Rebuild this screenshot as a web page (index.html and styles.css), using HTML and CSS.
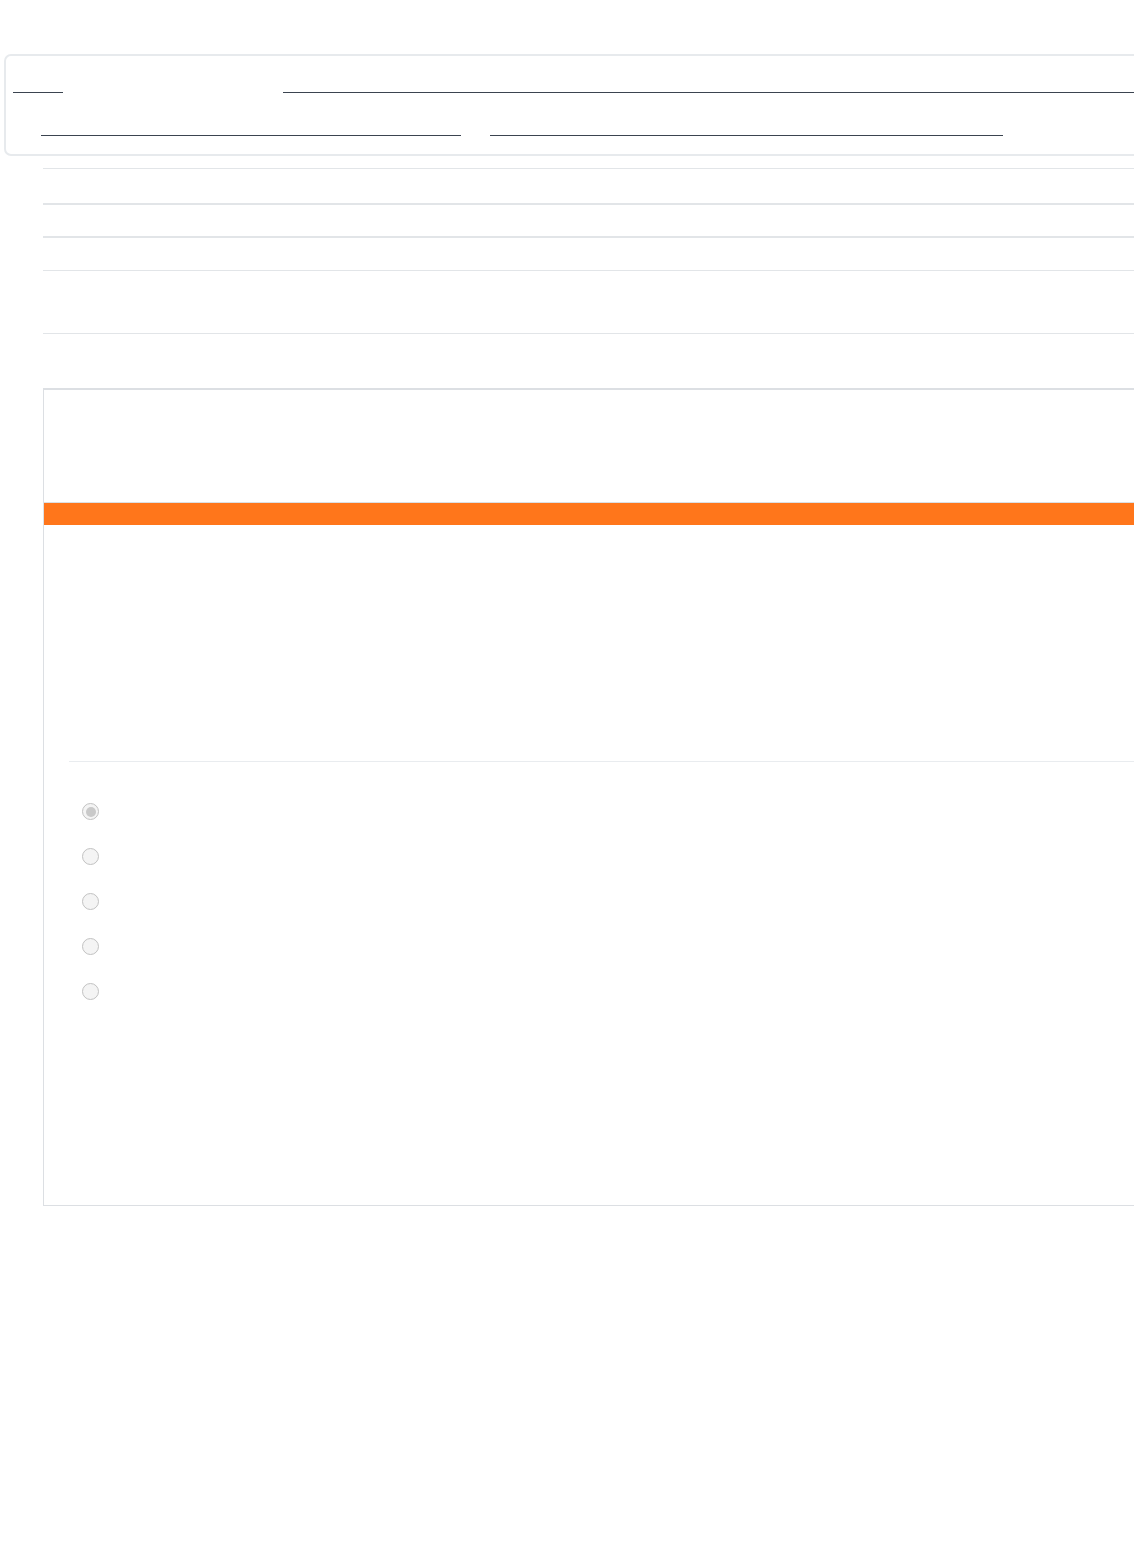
FILE: index.html
```html
<!DOCTYPE html>
<html lang="en">
<head>
    <meta charset="UTF-8">
    <meta name="viewport" content="width=device-width, initial-scale=1.0">
    <title>Quiz</title>

    <link rel="stylesheet" href="styles.css">
</head>

<body>
    <div class="page">
        <div class="page-inner">
            <!-- Barra de navegacion superior -->
            <nav class="topbar">
                <div class="nav-row nav-row-first">
                    <span class="nav-link nav-home"></span>
                    <span class="nav-link nav-title"></span>
                </div>
                <div class="nav-row nav-row-second">
                    <span class="nav-link nav-course"></span>
                    <span class="nav-link nav-lesson"></span>
                </div>
            </nav>

            <!-- Tabla de informacion del intento -->
            <div class="info-table">
                <div class="info-row info-row-a"></div>
                <div class="info-row info-row-b"></div>
                <div class="info-row info-row-c"></div>
                <div class="info-row info-row-d"></div>
            </div>

            <!-- Pregunta -->
            <section class="quiz-card">
                <div class="quiz-head"></div>
                <div class="quiz-bar"></div>
                <div class="quiz-body">
                    <div class="question"></div>
                    <ul class="answers">
                        <li><input type="radio" name="answer" disabled checked></li>
                        <li><input type="radio" name="answer" disabled></li>
                        <li><input type="radio" name="answer" disabled></li>
                        <li><input type="radio" name="answer" disabled></li>
                        <li><input type="radio" name="answer" disabled></li>
                    </ul>
                </div>
            </section>
        </div>
    </div>
</body>

</html>
```

FILE: styles.css
```css
body {
    margin: 0;
    font-family: "Liberation Sans", Arial, sans-serif;
    background-color: #fff;
}

.page {
    margin-right: 1px;
    overflow: hidden;
}

.page-inner {
    width: 1300px;
}

.topbar {
    margin: 54px 0 0 4px;
    padding-bottom: 18px;
    border: 2px solid #e7eaed;
    border-radius: 7px;
}

.nav-row {
    display: flex;
    align-items: flex-end;
}

.nav-row-first {
    height: 37px;
}

.nav-row-second {
    height: 43px;
}

.nav-link {
    display: block;
    height: 1px;
    background-color: #3b4450;
}

.nav-home {
    margin-left: 7px;
    width: 50px;
}

.nav-title {
    margin-left: 220px;
    flex: 1;
}

.nav-course {
    margin-left: 35px;
    width: 420px;
}

.nav-lesson {
    margin-left: 29px;
    width: 513px;
}

.info-table {
    margin: 12px 0 0 43px;
    border-bottom: 1px solid #e2e5e8;
}

.info-row {
    border-top: 1px solid #e2e5e8;
}

.info-row-a {
    height: 34px;
}

.info-row-b {
    height: 31px;
    border-top-width: 2px;
}

.info-row-c {
    height: 32px;
    border-top-width: 2px;
}

.info-row-d {
    height: 62px;
}

.quiz-card {
    margin: 54px 0 0 43px;
    border: 1px solid #dcdfe3;
    border-top-width: 2px;
}

.quiz-head {
    height: 112px;
    border-bottom: 1px solid #dcdfe3;
}

.quiz-bar {
    height: 22px;
    background-color: #ff761b;
}

.quiz-body {
    padding: 0 0 191px 25px;
}

.question {
    height: 236px;
    border-bottom: 1px solid #e9ecef;
}

.answers {
    list-style: none;
    margin: 0;
    padding: 27px 0 0 0;
}

.answers li {
    display: flex;
    align-items: center;
    height: 45px;
}

.answers input[type="radio"] {
    -webkit-appearance: none;
    appearance: none;
    box-sizing: border-box;
    width: 17px;
    height: 17px;
    margin: 0 0 0 13px;
    border: 1px solid #c2c2c2;
    border-radius: 50%;
    background-color: #f4f4f4;
    display: grid;
    place-content: center;
}

.answers input[type="radio"]:checked::before {
    content: "";
    width: 10px;
    height: 10px;
    border-radius: 50%;
    background-color: #c9c9c9;
}
```
